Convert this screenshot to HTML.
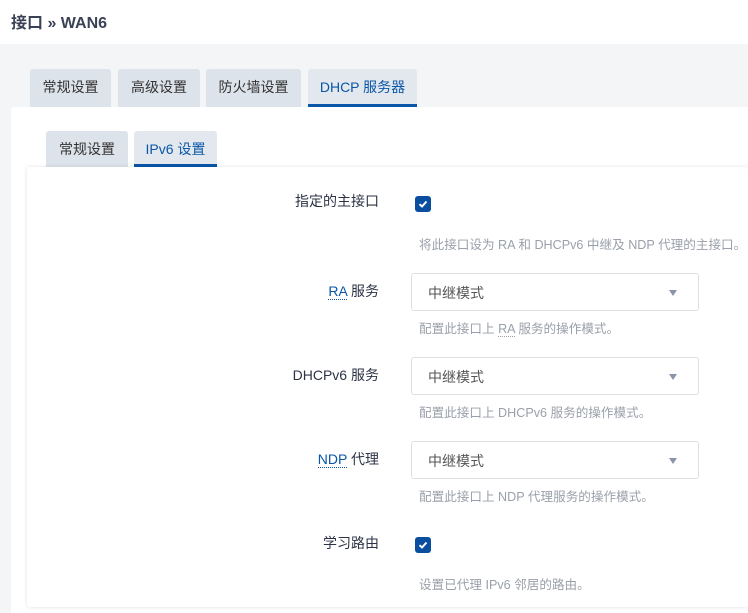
<!DOCTYPE html>
<html><head><meta charset="utf-8"><style>
*{margin:0;padding:0;box-sizing:border-box}
body{width:748px;height:613px;overflow:hidden;background:#f4f5f7;font-family:"Liberation Sans","Noto Sans CJK SC",sans-serif;font-size:14px;color:#333;position:relative}
.hdr{position:absolute;left:0;top:0;width:748px;height:44px;background:#fff}
.hdr h2{position:absolute;left:11px;top:9px;font-size:16px;font-weight:bold;color:#3a4256}
.tab{position:absolute;height:38px;background:#dde3ea;border-radius:3px 3px 0 0;text-align:center;line-height:36px;color:#333}
.tab.a{background:#e3e8ee;color:#0a56a8;border-bottom:3px solid #0a56a8}
.p1{position:absolute;left:11px;top:107px;width:737px;height:506px;background:#fff;border-radius:3px 0 0 0}
.p2{position:absolute;left:27px;top:167px;width:721px;height:440px;background:#fff;border-radius:3px;box-shadow:0 0 4px rgba(0,0,0,.12)}
.lbl{position:absolute;right:369px;color:#2d3345;white-space:nowrap}
.u{border-bottom:1px dotted #0a56a8;color:#0a56a8}
.cb{position:absolute;left:415px;width:16px;height:16px;background:#0a4ea0;border-radius:3px}
.cb svg{position:absolute;left:3px;top:3px}
.help{position:absolute;left:419px;color:#9aa0aa;font-size:12.6px;white-space:nowrap}
.sel{position:absolute;left:411px;width:288px;height:38px;border:1px solid #dcdfe4;border-radius:3px;background:#fff}
.sel span{position:absolute;left:16px;top:9px;color:#555}
.sel i{position:absolute;right:21px;top:16px;border:4px solid transparent;border-top:6px solid #8a94a6;border-bottom:0}
</style></head><body>
<div class="hdr"><h2>接口 » WAN6</h2></div>
<div class="tab" style="left:30px;top:69px;width:81px">常规设置</div>
<div class="tab" style="left:118px;top:69px;width:82px">高级设置</div>
<div class="tab" style="left:206px;top:69px;width:95px">防火墙设置</div>
<div class="tab a" style="left:308px;top:69px;width:109px">DHCP 服务器</div>
<div class="p1"></div>
<div class="tab" style="left:46px;top:131px;width:82px;height:36px">常规设置</div>
<div class="tab a" style="left:134px;top:131px;width:83px;height:36px">IPv6 设置</div>
<div class="p2"></div>
<div class="lbl" style="top:191px">指定的主接口</div>
<div class="cb" style="top:196px"><svg width="10" height="10" viewBox="0 0 10 10"><path d="M1.5 5.2L4 7.5 8.5 2.5" stroke="#fff" stroke-width="2" fill="none"/></svg></div>
<div class="help" style="top:234px">将此接口设为 RA 和 DHCPv6 中继及 NDP 代理的主接口。</div>
<div class="lbl" style="top:281px"><span class="u">RA</span> 服务</div>
<div class="sel" style="top:273px"><span>中继模式</span><i></i></div>
<div class="help" style="top:318px">配置此接口上 <span style="border-bottom:1px dotted #9aa0aa">RA</span> 服务的操作模式。</div>
<div class="lbl" style="top:365px">DHCPv6 服务</div>
<div class="sel" style="top:357px"><span>中继模式</span><i></i></div>
<div class="help" style="top:402px">配置此接口上 DHCPv6 服务的操作模式。</div>
<div class="lbl" style="top:449px"><span class="u">NDP</span> 代理</div>
<div class="sel" style="top:441px"><span>中继模式</span><i></i></div>
<div class="help" style="top:486px">配置此接口上 NDP 代理服务的操作模式。</div>
<div class="lbl" style="top:533px">学习路由</div>
<div class="cb" style="top:537px"><svg width="10" height="10" viewBox="0 0 10 10"><path d="M1.5 5.2L4 7.5 8.5 2.5" stroke="#fff" stroke-width="2" fill="none"/></svg></div>
<div class="help" style="top:574px">设置已代理 IPv6 邻居的路由。</div>
</body></html>
